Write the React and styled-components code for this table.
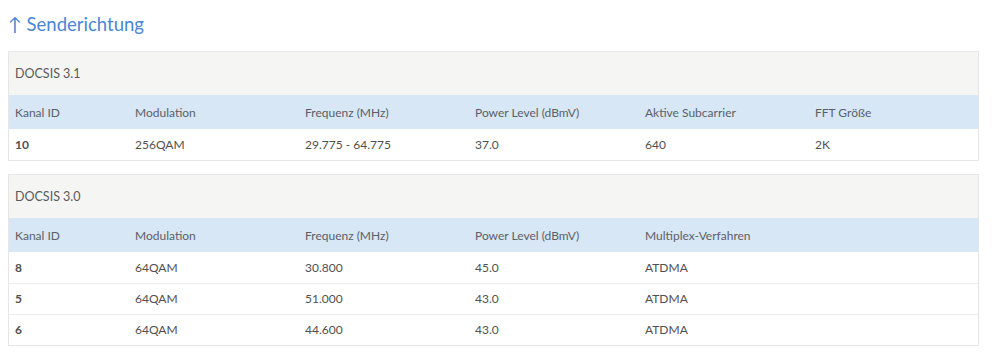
import React from "react";
import styled, { createGlobalStyle } from "styled-components";

const Global = createGlobalStyle`
  html, body { margin: 0; padding: 0; background: #fff; }
  body { font-family: Lato, "Noto Sans", sans-serif; color: #5a5a5a; }
`;

const Page = styled.div`
  padding: 8px 20px 8px 8px;
`;

const Title = styled.h2`
  margin: 0 0 15px 0;
  height: 28px;
  line-height: 32px;
  font-size: 18.5px;
  font-weight: 400;
  color: #4a86d4;
`;

const Panel = styled.div`
  border: 1px solid #e6e6e6;
  margin-bottom: 13px;
`;

const Caption = styled.div`
  background: #f5f5f3;
  height: 43px;
  display: flex;
  align-items: center;
  padding-left: 6px;
  font-size: 12.5px;
  color: #5a5a5a;
`;

const Table = styled.table`
  width: 100%;
  border-collapse: collapse;
  table-layout: fixed;
  font-size: 12px;
`;

const Col = styled.col`
  width: ${(p) => p.$w}px;
`;

const HeadRow = styled.tr`
  background: #d7e7f6;
  height: 34px;
`;

const Th = styled.th`
  text-align: left;
  font-weight: 400;
  padding: 0 0 0 6px;
  color: #5c6066;
`;

const Row = styled.tr`
  height: 31px;
  & + & { border-top: 1px solid #ececec; }
`;

const Td = styled.td`
  padding: 0 0 0 6px;
  color: #505050;
  font-weight: ${(p) => (p.$bold ? 700 : 400)};
`;

const widths = [120, 170, 170, 170, 170, 169];

function ChannelTable({ title, cols, rows }) {
  return (
    <Panel>
      <Caption>{title}</Caption>
      <Table>
        <colgroup>
          {widths.map((w, i) => (
            <Col key={i} $w={w} />
          ))}
        </colgroup>
        <thead>
          <HeadRow>
            {widths.map((w, i) => (
              <Th key={i}>{cols[i] || ""}</Th>
            ))}
          </HeadRow>
        </thead>
        <tbody>
          {rows.map((r, ri) => (
            <Row key={ri}>
              {widths.map((w, i) => (
                <Td key={i} $bold={i === 0}>{r[i] || ""}</Td>
              ))}
            </Row>
          ))}
        </tbody>
      </Table>
    </Panel>
  );
}

export default function App() {
  return (
    <Page>
      <Global />
      <Title>↑ Senderichtung</Title>
      <ChannelTable
        title="DOCSIS 3.1"
        cols={["Kanal ID", "Modulation", "Frequenz (MHz)", "Power Level (dBmV)", "Aktive Subcarrier", "FFT Größe"]}
        rows={[["10", "256QAM", "29.775 - 64.775", "37.0", "640", "2K"]]}
      />
      <ChannelTable
        title="DOCSIS 3.0"
        cols={["Kanal ID", "Modulation", "Frequenz (MHz)", "Power Level (dBmV)", "Multiplex-Verfahren"]}
        rows={[
          ["8", "64QAM", "30.800", "45.0", "ATDMA"],
          ["5", "64QAM", "51.000", "43.0", "ATDMA"],
          ["6", "64QAM", "44.600", "43.0", "ATDMA"],
        ]}
      />
    </Page>
  );
}
